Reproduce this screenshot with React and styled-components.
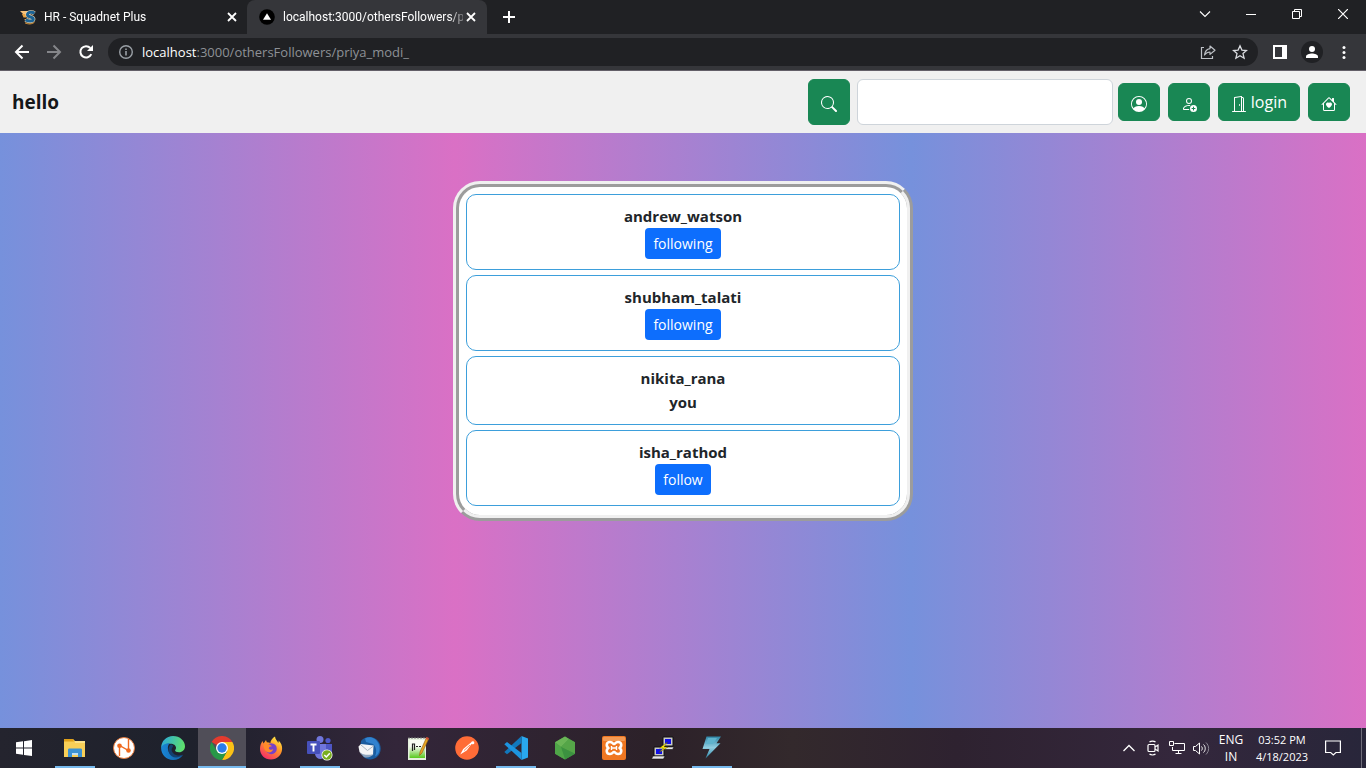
import React from "react";
import styled, { createGlobalStyle, css } from "styled-components";
import {
  BsSearch,
  BsPersonCircle,
  BsPersonAdd,
  BsDoorOpen,
  BsHouseHeart,
} from "react-icons/bs";

const GlobalStyle = createGlobalStyle`
  *, *::before, *::after { box-sizing: border-box; }
  body {
    margin: 0;
    font-family: "Open Sans", "Noto Sans", sans-serif;
    color: #212529;
  }
  button, input { font-family: inherit; }
  button { cursor: pointer; }
  svg { display: block; }
`;

const Screen = styled.div`
  display: flex;
  flex-direction: column;
  min-height: 100vh;
`;

/* ---------- browser frame ---------- */

const TabStrip = styled.header`
  display: flex;
  height: 34px;
  background: #202124;
  font-family: Roboto, "Open Sans", sans-serif;
`;

const Tab = styled.div`
  display: flex;
  align-items: center;
  width: ${(p) => (p.$active ? 240 : 247)}px;
  height: 34px;
  padding: 0 ${(p) => (p.$active ? 10 : 9)}px 0 ${(p) => (p.$active ? 12 : 20)}px;
  gap: 8px;
  color: #fff;
  font-size: 12px;
  border-radius: 8px 8px 0 0;
  background: ${(p) => (p.$active ? "#35363a" : "transparent")};
`;

const TabTitle = styled.span`
  flex: 1;
  min-width: 0;
  margin-right: -6px;
  white-space: nowrap;
  line-height: 16px;
  mask-image: linear-gradient(to right, #000 92%, rgba(0, 0, 0, 0.3));
`;

const PlainButton = styled.button`
  display: flex;
  align-items: center;
  justify-content: center;
  flex: none;
  width: ${(p) => p.$w}px;
  height: ${(p) => p.$h}px;
  padding: 0;
  border: 0;
  background: transparent;
  color: ${(p) => p.$color || "#fff"};
`;

const NewTab = styled(PlainButton)`
  margin-left: 8px;
`;

const WindowControls = styled.div`
  display: flex;
  margin-left: auto;
`;

const Toolbar = styled.div`
  display: flex;
  align-items: center;
  height: 37px;
  padding: 0 6px;
  background: #35363a;
  border-bottom: 1px solid #635f68;
`;

const AddressBar = styled.div`
  display: flex;
  align-items: center;
  flex: 1;
  height: 28px;
  margin: 0 6px;
  padding: 0 2px 0 10px;
  border-radius: 14px;
  background: #202124;
  color: #9aa0a6;
`;

const Address = styled.span`
  flex: 1;
  margin-left: 8px;
  font-size: 13px;
  line-height: 20px;
  color: #8e9196;

  b {
    font-weight: 400;
    color: #fff;
  }
`;

/* ---------- site ---------- */

const SiteNav = styled.nav`
  display: flex;
  align-items: center;
  padding: 8px 16px 8px 12px;
  background: #f0f0f0;
`;

const Brand = styled.a`
  font-size: 19px;
  line-height: 30px;
  font-weight: 700;
  color: #151719;
  text-decoration: none;
`;

const SearchForm = styled.form`
  display: flex;
  gap: 7px;
  margin: 0 5px 0 auto;
`;

const SearchField = styled.input`
  width: 256px;
  height: 46px;
  padding: 6px 12px;
  border: 1px solid #ced4da;
  border-radius: 6px;
  background: #fff;
  font-size: 16px;
`;

const GreenButton = styled.button`
  display: inline-flex;
  align-items: center;
  justify-content: center;
  gap: 4px;
  min-width: 42px;
  height: ${(p) => (p.$tall ? 46 : 38)}px;
  padding: 0 12px;
  border: 1px solid #198754;
  border-radius: 6px;
  background: #198754;
  color: #fff;
  font-size: 16px;
  line-height: 24px;

  svg {
    width: 16px;
    height: 16px;
    margin-top: 4px;
  }
`;

const NavActions = styled.div`
  display: flex;
  gap: 8px;
`;

const Main = styled.main`
  flex: 1;
  padding: 48px 16px;
  background: linear-gradient(
    to right,
    #7691dc,
    #da70c5 33.33%,
    #7691dc 66.67%,
    #da70c5
  );
`;

const FollowerList = styled.ul`
  display: flex;
  flex-direction: column;
  gap: 5px;
  width: 100%;
  max-width: 460px;
  margin: 0 auto;
  padding: 7px 7px 9px;
  list-style: none;
  border: 6px ridge #f0f0f0;
  border-radius: 27px;
  background: #fff;
`;

const Follower = styled.li`
  display: flex;
  flex-direction: column;
  align-items: center;
  padding: 9px 8px 10px;
  border: 1px solid #3d9fdb;
  border-radius: 10px;
  font-size: 15px;
  line-height: 24px;
  font-weight: 700;
`;

const FollowButton = styled.button`
  height: 31px;
  padding: 0 8px;
  border: 0;
  border-radius: 4px;
  background: #0d6efd;
  color: #fff;
  font-size: 14px;
  line-height: 21px;
`;

/* ---------- desktop taskbar ---------- */

const Taskbar = styled.footer`
  display: flex;
  height: 40px;
  color: #fff;
  background: linear-gradient(
    to right,
    #24242e,
    #1e212c 14%,
    #33263a 29%,
    #2c2129 48%,
    #33292c 58%,
    #2e2230 70%,
    #34273c 86%,
    #28263a
  );
`;

const Apps = styled.div`
  display: flex;
  gap: 1px;
  margin-left: 3px;
`;

const AppButton = styled.button`
  display: flex;
  align-items: center;
  justify-content: center;
  width: 48px;
  height: 40px;
  padding: 0;
  border: 0;
  background: ${(p) => (p.$active ? "#504e58" : "transparent")};
  ${(p) =>
    (p.$open || p.$active) &&
    css`
      background-image: linear-gradient(#76b9ed, #76b9ed);
      background-repeat: no-repeat;
      background-position: center bottom;
      background-size: ${p.$active ? 48 : 40}px 2px;
    `}
`;

const Tray = styled.div`
  display: flex;
  align-items: center;
  margin-left: auto;
`;

const TrayText = styled.div`
  width: ${(p) => p.$w}px;
  font-size: ${(p) => p.$size}px;
  line-height: 17px;
  text-align: center;
  white-space: nowrap;
`;

const ShowDesktop = styled.button`
  width: 5px;
  height: 40px;
  margin-left: 10px;
  padding: 0;
  border: 0;
  border-left: 1px solid #6f6d7a;
  background: transparent;
`;

/* ---------- drawings ---------- */

const Icon = ({ size = 16, box = 16, children, ...rest }) => (
  <svg
    width={size}
    height={size}
    viewBox={`0 0 ${box} ${box}`}
    fill="none"
    stroke="currentColor"
    aria-hidden="true"
    {...rest}
  >
    {children}
  </svg>
);

const CloseIcon = () => (
  <Icon size={10} box={10} strokeWidth="1.8">
    <path d="M1 1l8 8M9 1L1 9" />
  </Icon>
);

const SquadnetIcon = () => (
  <Icon stroke="none">
    <path d="M0 2h8L6.500 5H3z" fill="#f7c27a" />
    <path d="M2 5h4.500v3.500H3.500zM4 10h3v2.500z" fill="#eda440" />
    <path
      d="M14.400 4.300C12.200 2.600 7.800 3 7.500 5.500c-.2 3 6 2 5.800 4.600-.2 2.500-5 2.600-7.600.6"
      stroke="#f3dcb4"
      strokeWidth="4.200"
    />
    <path
      d="M14.400 4.300C12.200 2.600 7.800 3 7.500 5.500c-.2 3 6 2 5.800 4.600-.2 2.500-5 2.600-7.600.6"
      stroke="#1b6396"
      strokeWidth="3"
    />
    <path d="M5 13.800c3 1.600 7.500 1.500 9.500-.8" stroke="#eda440" strokeWidth="1" />
  </Icon>
);

const VercelIcon = () => (
  <Icon stroke="none">
    <circle cx="8" cy="8" r="7.800" fill="#000" />
    <path d="M8 4.200l4 6.600H4z" fill="#fff" />
  </Icon>
);

const StartIcon = () => (
  <Icon stroke="none" fill="#fff">
    <path d="M0 2.300l7-1v6.300H0zM8 1.200L16 0v7.600H8zM0 8.500h7v6.200l-7-1zM8 8.500h8V16l-8-1.100z" />
  </Icon>
);

const ExplorerIcon = () => (
  <Icon size={24} box={24} stroke="none">
    <path d="M1 3h9l2 2h10v16H1z" fill="#f8cf57" />
    <path d="M1 3h9l1 2.500H1z" fill="#e0a019" />
    <path d="M12 5h10v2H12z" fill="#fbe28b" />
    <path d="M5 14c0-1 .5-1.500 1.500-1.500h11c1 0 1.500.5 1.500 1.500v7h-4v-4H9v4H5z" fill="#3c92d2" />
    <path d="M9 17h6v2H9z" fill="#bfe0f2" />
  </Icon>
);

const NodesIcon = () => (
  <Icon size={24} box={24} stroke="none">
    <circle cx="12" cy="12" r="10.500" fill="#fff" stroke="#e77a3b" strokeWidth="1" />
    <path d="M7.500 20V9.500l9 5V3" stroke="#f06a1f" strokeWidth="1.400" />
    <circle cx="7.500" cy="9.800" r="2.300" fill="#f06a1f" />
    <circle cx="16.500" cy="14.500" r="2.300" fill="#f06a1f" />
  </Icon>
);

const EdgeIcon = () => (
  <Icon size={24} box={24} stroke="none">
    <defs>
      <linearGradient id="edgeTop" x1="0" x2="1" y1=".2" y2=".4">
        <stop offset="0" stopColor="#2aa8dc" />
        <stop offset="1" stopColor="#5ee06c" />
      </linearGradient>
      <linearGradient id="edgeBase" x1="0" x2="1">
        <stop offset="0" stopColor="#1a86d6" />
        <stop offset="1" stopColor="#1262a8" />
      </linearGradient>
    </defs>
    <path d="M.2 12.500C-.2 5.500 5.200 0 12 0c7 0 12 5 12 10.200 0 3.600-2.600 6-6 6-3 0-4.400-1.200-3.800-2.100 2.400-3.400-.8-6.300-4.500-6.300-5 0-8.500 2-9.500 4.700z" fill="url(#edgeTop)" />
    <path d="M.1 12C1 8.500 5 7 9 7.200c-2.300 1.500-3 5.800-.7 9.300 2.600 4 8.200 5.300 13.700 2.200C20 22 16.300 24 12 24 5.300 24 .2 18.600.1 12z" fill="url(#edgeBase)" />
    <path d="M9.800 8.500c-3.500 3-3 9 1 11.700 3 2 7.500 1.600 11.200-1.500-3 1.300-7 1.200-9.500-1.200-2.700-2.600-2-5-.7-6.500.8-1 .1-2.300-2-2.500z" fill="#13406f" />
  </Icon>
);

const ChromeIcon = () => (
  <Icon size={24} box={24} stroke="none">
    <path d="M12 12L1.600 6A12 12 0 0 1 22.400 6z" fill="#e33b2e" />
    <path d="M12 12V6h10.400A12 12 0 0 1 12 24l5.200-9z" fill="#fbc116" />
    <path d="M12 12l5.200 3L12 24A12 12 0 0 1 1.600 6l5.200 9z" fill="#279847" />
    <circle cx="12" cy="12" r="6" fill="#fff" />
    <circle cx="12" cy="12" r="4.700" fill="#2b7de9" />
  </Icon>
);

const FirefoxIcon = () => (
  <Icon size={24} box={24} stroke="none">
    <defs>
      <linearGradient id="fox" x1=".8" x2=".2" y1="0" y2="1">
        <stop offset="0" stopColor="#fff24a" />
        <stop offset=".4" stopColor="#ff9a26" />
        <stop offset="1" stopColor="#f5246d" />
      </linearGradient>
    </defs>
    <path d="M16 .5c.3 3 2.300 4 3.200 6.500.5-.7.600-1.600.4-2.500 2.600 2.500 3.700 5.500 3.500 8.500C22.800 19 18 23.500 12 23.500 5.500 23.500 1 18.800 1 13c0-3.300 1-5.800 2.600-8L4.500 7.500 7 4l.8 2.300c1.400 0 2.500.2 3.600.8C11.300 4.500 13.500 2 16 .5z" fill="url(#fox)" />
    <circle cx="12.300" cy="12.700" r="5.500" fill="#7542c8" />
    <path d="M4.500 8.500c3-1.800 6-.5 8.500 1.700-2 0-3 .8-3.200 2.300.8 1.500 2.800 1.500 4.500.8-1 3-4 4-6.500 2.500C5.300 14.300 4.500 11 4.500 8.500z" fill="#ff8a28" />
  </Icon>
);

const TeamsIcon = () => (
  <Icon size={26} box={26} stroke="none">
    <circle cx="13" cy="4.500" r="3.500" fill="#7076dc" />
    <circle cx="21" cy="5.500" r="2.600" fill="#5059c9" />
    <path d="M17 9h8v8a4 4 0 0 1-8 1z" fill="#4e56c4" />
    <path d="M8 9h11v9a5.500 5.500 0 0 1-11 1z" fill="#7076dc" />
    <rect x="0" y="6" width="13" height="13" rx="1" fill="#4650bb" />
    <path d="M3.500 9.500h6M6.500 9.500v7" stroke="#fff" strokeWidth="1.900" />
    <circle cx="20" cy="20" r="5.500" fill="#fff" />
    <circle cx="20" cy="20" r="4.800" fill="#79ad1f" />
    <path d="M17.300 20l2 2 3.500-3.800" stroke="#fff" strokeWidth="1.500" />
  </Icon>
);

const ThunderbirdIcon = () => (
  <Icon size={24} box={24} stroke="none">
    <path d="M4 5C8-.5 17-.5 21 5c4 5.300 3.500 12-1 16-4 3.500-10 3-13.500 0L3 14z" fill="#1b5c9e" />
    <path d="M8 2.500c5-3 11-.5 13.500 5C24 13 22 18.500 18 20.500c2-5 1.500-9.500-2-12.500L9 6z" fill="#3182cf" />
    <path d="M1.500 10.500L4 8l12.500 1.500L16 19l-9 1-4.500-4z" fill="#f4f5f6" />
    <path d="M4 9l6.500 5.500 6-4.500" stroke="#aab6c1" strokeWidth="1" />
    <path d="M2.500 16.500c4 2.500 9 3 14 1.500-2 3-6 4.500-9.500 3z" fill="#8fa6bf" />
  </Icon>
);

const NotepadIcon = () => (
  <Icon size={24} box={24} stroke="none">
    <defs>
      <linearGradient id="note" x1="0" x2="0" y1="0" y2="1">
        <stop offset=".35" stopColor="#f8fbf4" />
        <stop offset="1" stopColor="#57c91d" />
      </linearGradient>
    </defs>
    <path d="M2 2h18v22H2z" fill="#e4efdd" />
    <path d="M3.500 4H19v18H3.500z" fill="url(#note)" />
    <path d="M3 1v2M6 1v2M9 1v2M12 1v2M15 1v2M18 1v2" stroke="#777" strokeWidth="1" />
    <path d="M6.500 15V8h2v6M10 10.500h2M13 10.500h2" stroke="#222" strokeWidth="1.200" />
    <path d="M20.500 1.500l2.300 1.200L16 17l-2.500 2.500.5-3.500z" fill="#e7a622" stroke="#8c5716" strokeWidth=".6" />
    <path d="M20.500 1l2.500 1-1 2-2.300-1.200z" fill="#cf4c3b" />
  </Icon>
);

const PostmanIcon = () => (
  <Icon size={24} box={24} stroke="none">
    <circle cx="12" cy="12" r="11.800" fill="#ff6c37" />
    <path d="M16 6.500c1-1.800 3.500-1.500 3.300.4-.1 1.400-1.800 1.800-2.800 1.200l-4.800 6.500-6.500 4 3-5.500z" fill="#fff" />
    <path d="M9 14.500l6-5.500" stroke="#ff6c37" strokeWidth=".8" />
  </Icon>
);

const CodeIcon = () => (
  <Icon size={24} box={24} stroke="none">
    <path d="M17.500 0L24 2.500v19L17.500 24z" fill="#29a8ef" />
    <path d="M17.500 0v7L3 18.200.3 16z" fill="#1178bd" />
    <path d="M17.500 24v-7L3 6 .3 8.200z" fill="#1d94df" />
  </Icon>
);

const NodeIcon = () => (
  <Icon size={24} box={24} stroke="none">
    <path d="M12 .5l10 5.700v11.500L12 23.500 2 17.700V6.200z" fill="#469a43" />
    <path d="M2 6.200l10-5.700 4 2.500-8 8z" fill="#6ab456" />
    <path d="M16 3l6 3.200v11.500L8 11z" fill="#55a548" />
    <path d="M8 11l14 6.700-10 5.800z" fill="#3c9140" />
    <path d="M2 6.200L8 11l4 12.500-10-5.800z" fill="#4fa548" />
  </Icon>
);

const XamppIcon = () => (
  <Icon size={24} box={24} stroke="none">
    <rect width="24" height="24" rx="2" fill="#ef7722" />
    <rect x="1" y="1" width="22" height="4" rx="1" fill="#f39a55" />
    <path
      d="M8 6C4 6 4 10.500 6.500 12 4 13.500 4 18 8 18c3 0 2.500-2 4-2s1 2 4 2c4 0 4-4.500 1.500-6C20 10.500 20 6 16 6c-3 0-2.500 2-4 2S11 6 8 6z"
      stroke="#fff"
      strokeWidth="2.600"
      strokeLinejoin="round"
    />
    <path d="M9.500 12h5M9.500 10v4M14.500 10v4" stroke="#fff" strokeWidth="1.400" />
  </Icon>
);

const PuttyIcon = () => (
  <Icon size={24} box={24} stroke="none">
    <path d="M12 1h10v9H12z" fill="#c9c9c9" stroke="#111" />
    <path d="M14 3h6v5h-6z" fill="#1010e8" />
    <path d="M11 11h12l-1.500 2.500H10z" fill="#e8e8e8" stroke="#111" strokeWidth=".6" />
    <path d="M3 11h10v9H3z" fill="#c9c9c9" stroke="#111" />
    <path d="M5 13h6v5H5z" fill="#1010e8" />
    <path d="M2 20h12l-1.500 3H.5z" fill="#e8e8e8" stroke="#111" strokeWidth=".6" />
    <path d="M16.500 6l-8 6h4l-4.500 4.500 9-5.500h-4z" fill="#ffee12" stroke="#444400" strokeWidth=".4" />
  </Icon>
);

const BoltIcon = () => (
  <Icon size={24} box={24} stroke="none">
    <defs>
      <linearGradient id="bolt" x1="0" x2="0" y1="0" y2="1">
        <stop offset="0" stopColor="#2f87a8" />
        <stop offset=".5" stopColor="#8fcde0" />
        <stop offset="1" stopColor="#2b86a9" />
      </linearGradient>
    </defs>
    <path d="M6.500.5H21l-4.500 6.800h4L5.500 22.500 9.500 13H2.500z" fill="url(#bolt)" />
    <path d="M8 2h9l-4 6H6z" fill="#5fb3cd" />
  </Icon>
);

const followers = [
  { name: "andrew_watson", action: "following" },
  { name: "shubham_talati", action: "following" },
  { name: "nikita_rana", self: true },
  { name: "isha_rathod", action: "follow" },
];

const apps = [
  { label: "File Explorer", art: ExplorerIcon, open: true },
  { label: "Network tool", art: NodesIcon },
  { label: "Edge", art: EdgeIcon },
  { label: "Chrome", art: ChromeIcon, active: true },
  { label: "Firefox", art: FirefoxIcon },
  { label: "Teams", art: TeamsIcon, open: true },
  { label: "Thunderbird", art: ThunderbirdIcon },
  { label: "Notepad++", art: NotepadIcon },
  { label: "Postman", art: PostmanIcon },
  { label: "Visual Studio Code", art: CodeIcon, open: true },
  { label: "Node.js", art: NodeIcon },
  { label: "XAMPP", art: XamppIcon },
  { label: "PuTTY", art: PuttyIcon },
  { label: "Thunder", art: BoltIcon, open: true },
];

function BrowserFrame() {
  return (
    <>
      <TabStrip>
        <Tab>
          <SquadnetIcon />
          <TabTitle>HR - Squadnet Plus</TabTitle>
          <PlainButton $w={12} $h={16} aria-label="Close tab">
            <CloseIcon />
          </PlainButton>
        </Tab>
        <Tab $active>
          <VercelIcon />
          <TabTitle>localhost:3000/othersFollowers/p</TabTitle>
          <PlainButton $w={12} $h={16} aria-label="Close tab">
            <CloseIcon />
          </PlainButton>
        </Tab>
        <NewTab $w={28} $h={34} aria-label="New tab">
          <Icon size={12} box={12} strokeWidth="2">
            <path d="M6 0v12M0 6h12" />
          </Icon>
        </NewTab>
        <WindowControls>
          <PlainButton $w={46} $h={28} aria-label="Search tabs">
            <Icon size={12} box={12} strokeWidth="1.100">
              <path d="M1 3.500l5 5 5-5" />
            </Icon>
          </PlainButton>
          <PlainButton $w={46} $h={28} aria-label="Minimize">
            <Icon size={10} box={10}>
              <path d="M0 5.500h10" />
            </Icon>
          </PlainButton>
          <PlainButton $w={46} $h={28} aria-label="Restore">
            <Icon size={10} box={10}>
              <path d="M.5 2.500h7v7h-7zM2.500 2.500v-2h7v7h-2" />
            </Icon>
          </PlainButton>
          <PlainButton $w={46} $h={28} aria-label="Close window">
            <Icon size={10} box={10} strokeWidth="1.200">
              <path d="M0 0l10 10M10 0L0 10" />
            </Icon>
          </PlainButton>
        </WindowControls>
      </TabStrip>
      <Toolbar>
        <PlainButton $w={32} $h={32} aria-label="Back">
          <Icon strokeWidth="2">
            <path d="M15 8H2M8.500 1.500L2 8l6.500 6.500" />
          </Icon>
        </PlainButton>
        <PlainButton $w={32} $h={32} $color="#85868a" aria-label="Forward">
          <Icon strokeWidth="2">
            <path d="M1 8h13M7.500 1.500L14 8l-6.500 6.500" />
          </Icon>
        </PlainButton>
        <PlainButton $w={32} $h={32} aria-label="Reload">
          <Icon strokeWidth="2">
            <path d="M13.300 10.200A5.700 5.700 0 1 1 12.300 4" />
            <path d="M15 1v6H9z" fill="currentColor" stroke="none" />
          </Icon>
        </PlainButton>
        <AddressBar>
          <Icon strokeWidth="1.400">
            <circle cx="8" cy="8" r="6.300" />
            <path d="M8 7v4.500M8 4.400v1.500" strokeWidth="1.600" />
          </Icon>
          <Address>
            <b>localhost</b>:3000/othersFollowers/priya_modi_
          </Address>
          <PlainButton $w={32} $h={28} $color="#bdc1c6" aria-label="Share">
            <Icon strokeWidth="1.200">
              <path d="M4 3.500H1.500v11h11V12" />
              <path d="M10 2l5 4.200-5 4.200V8C7.500 8 6 9 4.500 11 5 7.500 7 5 10 4.600z" strokeLinejoin="round" />
            </Icon>
          </PlainButton>
          <PlainButton $w={32} $h={28} $color="#dadce0" aria-label="Bookmark">
            <Icon strokeWidth="1.300">
              <path d="M8 1.800l1.900 4.300 4.600.4-3.500 3.100 1.100 4.600L8 11.800l-4.100 2.400L5 9.600 1.500 6.500l4.600-.4z" />
            </Icon>
          </PlainButton>
        </AddressBar>
        <PlainButton $w={32} $h={32} aria-label="Side panel">
          <Icon size={14} box={14} stroke="none">
            <path d="M0 0h14v14H0zM2 2v10h7V2z" fill="#fff" fillRule="evenodd" />
          </Icon>
        </PlainButton>
        <PlainButton $w={32} $h={32} aria-label="Profile">
          <Icon size={22} box={22} stroke="none">
            <circle cx="11" cy="11" r="11" fill="#202124" />
            <circle cx="11" cy="8" r="3" fill="#fff" />
            <path d="M5 17v-1.500c0-2 3.500-3 6-3s6 1 6 3V17z" fill="#fff" />
          </Icon>
        </PlainButton>
        <PlainButton $w={32} $h={32} aria-label="Menu">
          <Icon stroke="none" fill="#fff">
            <circle cx="8" cy="3.500" r="1.500" />
            <circle cx="8" cy="8.500" r="1.500" />
            <circle cx="8" cy="13.500" r="1.500" />
          </Icon>
        </PlainButton>
      </Toolbar>
    </>
  );
}

function DesktopBar() {
  return (
    <Taskbar>
      <AppButton aria-label="Start">
        <StartIcon />
      </AppButton>
      <Apps>
        {apps.map(({ label, art: Art, open, active }) => (
          <AppButton key={label} aria-label={label} $open={open} $active={active}>
            <Art />
          </AppButton>
        ))}
      </Apps>
      <Tray>
        <PlainButton $w={24} $h={40} aria-label="Hidden icons">
          <Icon size={12} box={12} strokeWidth="1.300">
            <path d="M.5 9L6 3.500 11.500 9" />
          </Icon>
        </PlainButton>
        <PlainButton $w={24} $h={40} aria-label="Meet now">
          <Icon strokeWidth="1.200">
            <rect x="3" y="4.500" width="7" height="7" rx="1" />
            <path d="M10 7l3-2v6l-3-2M4.500 2c1.500-1.300 4.500-1.300 6 0M4.500 14c1.500 1.300 4.500 1.300 6 0" />
          </Icon>
        </PlainButton>
        <PlainButton $w={24} $h={40} aria-label="Network">
          <Icon>
            <path d="M5.500 3.500h10v7H3.500V7M.5 1.500h4v4h-4zM6.500 13.500h6M9.500 10.500v3" />
          </Icon>
        </PlainButton>
        <PlainButton $w={24} $h={40} aria-label="Volume">
          <Icon size={17} box={17}>
            <path d="M.5 6.500h2l4-3.500v11l-4-3.500h-2zM8.500 6.500c1 1 1 3 0 4M10.500 4.500c2.300 2 2.300 6 0 8" />
            <path d="M13 2.500c3.500 3.500 3.500 8.500 0 12" stroke="#8d8996" />
          </Icon>
        </PlainButton>
        <TrayText $w={36} $size={12}>
          ENG
          <br />
          IN
        </TrayText>
        <TrayText $w={66} $size={11}>
          03:52 PM
          <br />
          4/18/2023
        </TrayText>
        <PlainButton $w={36} $h={40} aria-label="Notifications">
          <Icon strokeWidth="1.200">
            <path d="M.6 1h14.800v11.500h-4.500L8.300 15l-2.600-2.500H.6z" />
          </Icon>
        </PlainButton>
        <ShowDesktop aria-label="Show desktop" />
      </Tray>
    </Taskbar>
  );
}

export default function App() {
  return (
    <Screen>
      <GlobalStyle />
      <BrowserFrame />
      <SiteNav>
        <Brand href="#">hello</Brand>
        <SearchForm onSubmit={(e) => e.preventDefault()}>
          <GreenButton $tall aria-label="Search">
            <BsSearch />
          </GreenButton>
          <SearchField type="search" aria-label="Search users" />
        </SearchForm>
        <NavActions>
          <GreenButton aria-label="Profile">
            <BsPersonCircle />
          </GreenButton>
          <GreenButton aria-label="Add person">
            <BsPersonAdd />
          </GreenButton>
          <GreenButton>
            <BsDoorOpen />
            login
          </GreenButton>
          <GreenButton aria-label="Home">
            <BsHouseHeart />
          </GreenButton>
        </NavActions>
      </SiteNav>
      <Main>
        <FollowerList>
          {followers.map(({ name, action, self }) => (
            <Follower key={name}>
              <span>{name}</span>
              {self ? <span>you</span> : <FollowButton>{action}</FollowButton>}
            </Follower>
          ))}
        </FollowerList>
      </Main>
      <DesktopBar />
    </Screen>
  );
}
